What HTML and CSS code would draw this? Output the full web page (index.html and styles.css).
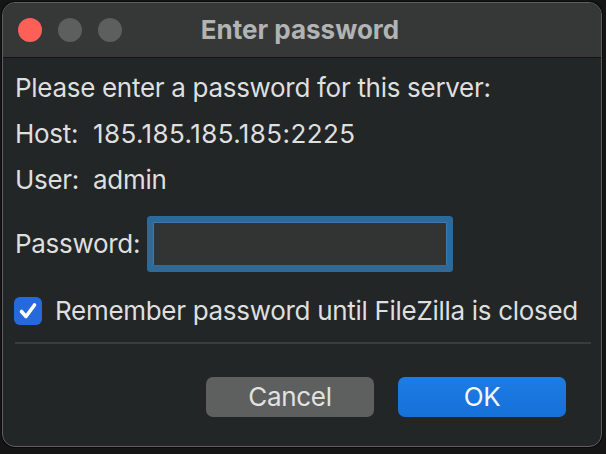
FILE: index.html
```html
<!DOCTYPE html>
<html>
<head>
<meta charset="utf-8">
<link rel="stylesheet" href="styles.css">
</head>
<body>
<div class="window">
  <div class="titlebar">
    <div class="lights">
      <span class="light red"></span>
      <span class="light gray"></span>
      <span class="light gray"></span>
    </div>
    <div class="title">Enter password</div>
  </div>
  <div class="content">
    <div class="line">Please enter a password for this server:</div>
    <div class="info">
      <span>Host:</span><span class="num">185.185.185.185:2225</span>
      <span>User:</span><span>admin</span>
    </div>
    <div class="pwrow">
      <span>Password:</span>
      <div class="input"></div>
    </div>
    <div class="checkrow">
      <span class="checkbox">
        <svg width="28" height="28" viewBox="0 0 28 28"><path d="M7.5 14.5 L12 19.5 L20.5 8" fill="none" stroke="#fff" stroke-width="3.6" stroke-linecap="round" stroke-linejoin="round"/></svg>
      </span>
      <span>Remember password until FileZilla is closed</span>
    </div>
    <div class="sep"></div>
    <div class="buttons">
      <div class="btn cancel">Cancel</div>
      <div class="btn ok">OK</div>
    </div>
  </div>
</div>
</body>
</html>
```
FILE: styles.css
```css
html, body {
  margin: 0;
  padding: 0;
  background: #151515;
  width: 606px;
  height: 454px;
  overflow: hidden;
}
body {
  padding: 2px;
  box-sizing: border-box;
  font-family: Inter, "Noto Sans", sans-serif;
}
.window {
  width: 600px;
  height: 445px;
  box-sizing: border-box;
  border: 1px solid #5f6161;
  border-radius: 13px;
  overflow: hidden;
  background: #232627;
  box-shadow: 0 0 0 1px #0a0a0a;
  display: flex;
  flex-direction: column;
}
.titlebar {
  height: 54px;
  flex: none;
  background: #363837;
  border-bottom: 1px solid #141414;
  position: relative;
  display: flex;
  align-items: center;
  justify-content: center;
}
.lights {
  position: absolute;
  left: 15px;
  top: 15px;
  display: flex;
  gap: 16px;
}
.light {
  width: 24px;
  height: 24px;
  border-radius: 50%;
  background: #5d5e5e;
}
.light.red { background: #fe5f57; }
.title {
  color: #b2b3b3;
  font-weight: 700;
  font-size: 26px;
  line-height: 30px;
  margin-right: 4px;
}
.content {
  padding: 15px 12px 0 12px;
  color: #dedfdf;
  font-size: 26px;
  line-height: 30px;
  letter-spacing: -0.3px;
  white-space: nowrap;
}
.info {
  display: grid;
  grid-template-columns: 78px auto;
  justify-content: start;
  row-gap: 16px;
  margin-top: 16px;
}
.num { letter-spacing: 0.4px; }
.pwrow {
  display: grid;
  grid-template-columns: 138px 294px;
  align-items: center;
  margin-top: 27px;
}
.input {
  height: 44px;
  box-sizing: border-box;
  background: #323433;
  border: 1px solid #3d7aab;
  border-bottom-color: #5d6061;
  border-radius: 1px;
  box-shadow: 0 0 0 6px #2b6a9a;
}
.checkrow {
  display: flex;
  align-items: center;
  gap: 13px;
  margin-top: 30px;
  margin-left: -1px;
}
.checkbox {
  width: 28px;
  height: 28px;
  border-radius: 6px;
  background: #2669dc;
  display: block;
  flex: none;
}
.checkbox svg { display: block; }
.sep {
  height: 2px;
  background: #3a3d3e;
  margin: 16px 0 0 0;
  width: 576px;
}
.buttons {
  display: flex;
  justify-content: flex-end;
  gap: 24px;
  margin-top: 33px;
  padding-right: 23px;
}
.btn {
  width: 168px;
  height: 40px;
  border-radius: 7px;
  display: flex;
  align-items: center;
  justify-content: center;
  font-size: 26px;
  color: #e2e2e2;
}
.cancel { background: #5e5f5f; }
.ok {
  background: linear-gradient(#1c7de4, #1670d8);
  color: #f4f7fb;
}
```
